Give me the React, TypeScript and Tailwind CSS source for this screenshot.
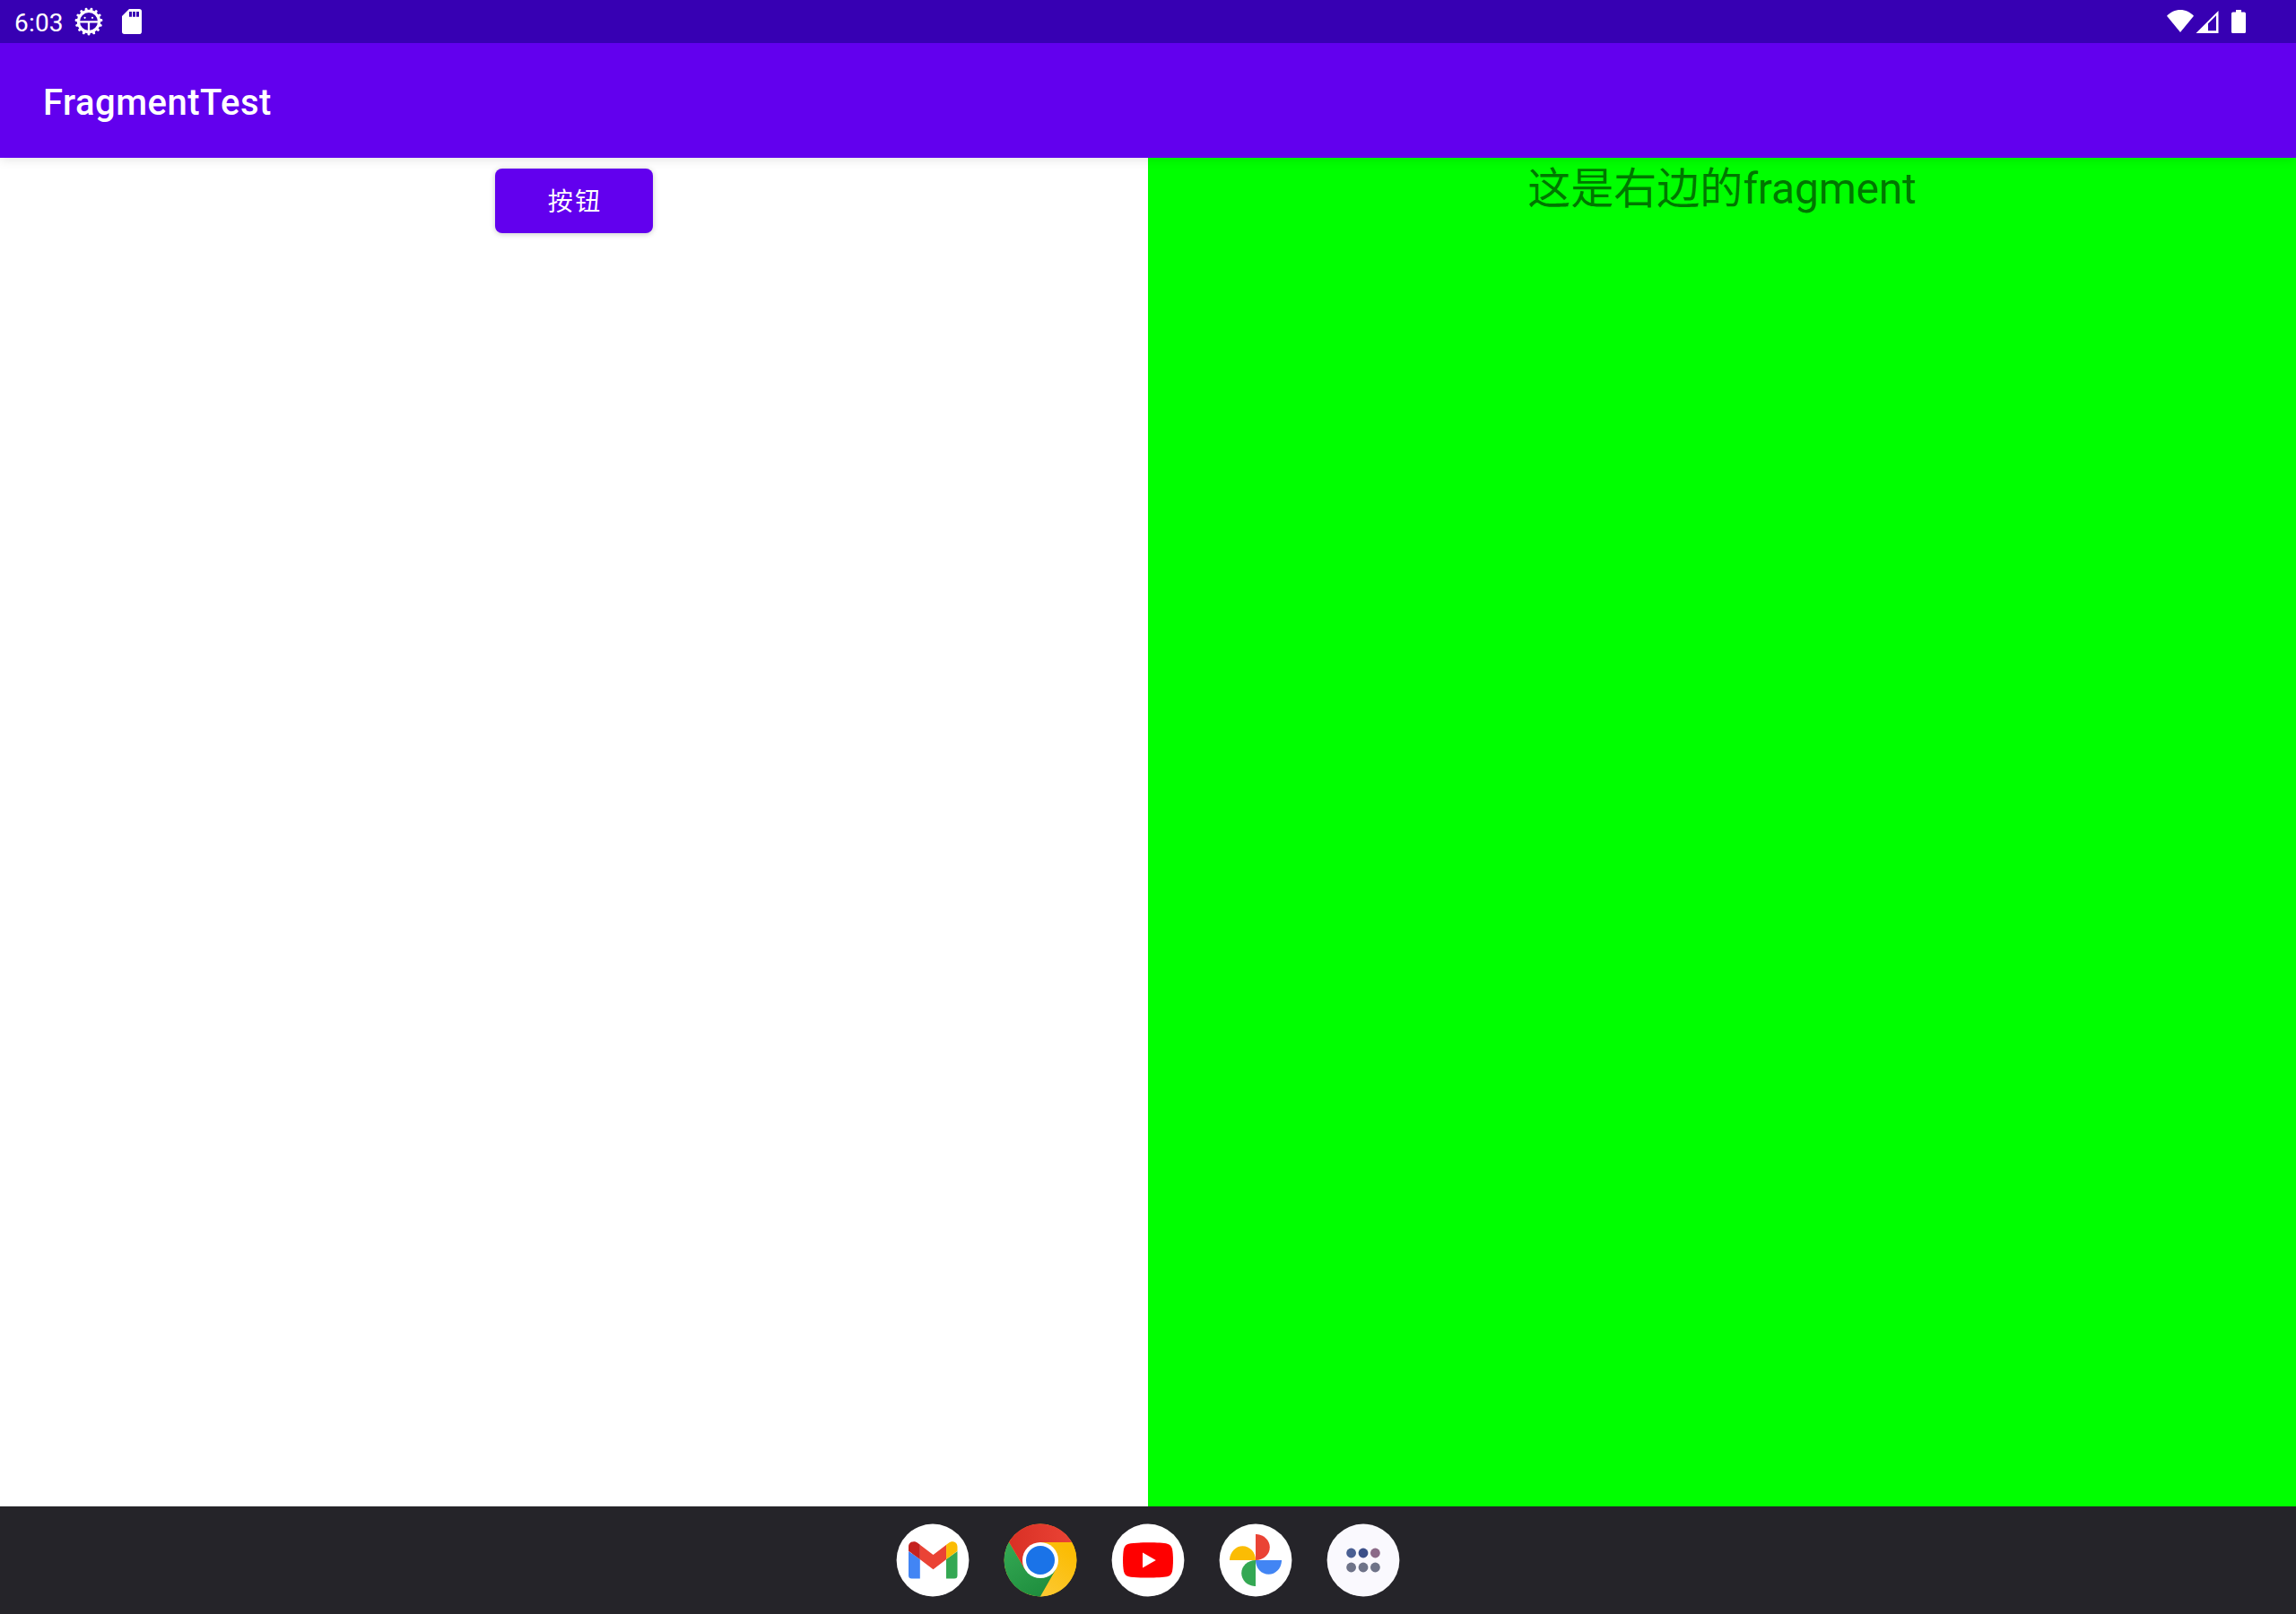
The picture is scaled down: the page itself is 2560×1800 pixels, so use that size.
import type { ReactNode } from "react";

function GearBugIcon() {
  const teeth = Array.from({ length: 15 }, (_, i) => i * 24);
  return (
    <svg className="size-8" viewBox="0 0 32 32" fill="none" stroke="#fff">
      <circle cx="16" cy="16" r="11.6" strokeWidth="3.2" />
      {teeth.map((a) => (
        <path key={a} d="M16 28V30" strokeWidth="3" strokeLinecap="round" transform={`rotate(${a} 16 16)`} />
      ))}
      <path d="M5 16.300H27M16 16V27" strokeWidth="2.3" />
      <circle cx="11.6" cy="11.8" r="1.100" fill="#fff" stroke="none" />
      <circle cx="20" cy="11.8" r="1.100" fill="#fff" stroke="none" />
    </svg>
  );
}

function SdCardIcon() {
  return (
    <svg className="h-7 w-[22px]" viewBox="0 0 22 28">
      <path
        fill="#fff"
        fillRule="evenodd"
        d="M8 0H19.2A2.8 2.8 0 0 1 22 2.8V25.2A2.8 2.8 0 0 1 19.2 28H2.8A2.8 2.8 0 0 1 0 25.2V8ZM8 3V8.8H11V3ZM12 3V8.8H15V3ZM16 3V8.8H19V3Z"
      />
    </svg>
  );
}

function WifiIcon() {
  return (
    <svg className="mb-px h-[25px] w-[30px]" viewBox="0 0 30 25">
      <path fill="#fff" d="M15 25L0 6.8C4 2.6 9.2 0 15 0S26 2.6 30 6.8Z" />
    </svg>
  );
}

function SignalIcon() {
  return (
    <svg className="h-[25px] w-[26px]" viewBox="0 0 26 25">
      <path fill="#fff" fillRule="evenodd" d="M0.5 25L25.5 0V25ZM14 14.2V22.3H23V5.3Z" />
    </svg>
  );
}

function BatteryIcon() {
  return (
    <svg className="h-[26px] w-4" viewBox="0 0 16 26">
      <path fill="#fff" d="M5 0H11V2.6H14.4Q16 2.6 16 4.2V24.4Q16 26 14.4 26H1.6Q0 26 0 24.4V4.2Q0 2.6 1.6 2.6H5Z" />
    </svg>
  );
}

function DockIcon({ label, fill = "#fff", children }: { label: string; fill?: string; children: ReactNode }) {
  return (
    <button aria-label={label} className="flex size-[82px] items-center justify-center">
      <svg className="size-[82px]" viewBox="-41 -41 82 82">
        <circle r="40.4" fill={fill} />
        {children}
      </svg>
    </button>
  );
}

function Gmail() {
  return (
    <DockIcon label="Gmail">
      <path fill="#4285f4" d="M-27 -10L-14.2 -1V20.5H-23.5A3.5 3.5 0 0 1 -27 17Z" />
      <path fill="#34a853" d="M27.5 -10L15 -1V20.5H24A3.5 3.5 0 0 0 27.5 17Z" />
      <path fill="#ea4335" d="M-14.3 -17.3L0.5 -6L15.2 -17.3V-0.9L0.5 10.3L-14.3 -0.9Z" />
      <path fill="#c5221f" d="M-27 -15C-27 -20.5 -20.5 -22.5 -16.5 -19.1L-14.2 -17.3V-0.9L-27 -10.3Z" />
      <path fill="#fbbc04" d="M27.5 -15C27.5 -20.5 21.5 -22.5 17.5 -19.1L15.1 -17.3V-0.9L27.5 -10.3Z" />
    </DockIcon>
  );
}

function Chrome() {
  return (
    <DockIcon label="Chrome" fill="#fbc116">
      <defs>
        <linearGradient id="chrome-red" x1="0" x2="1">
          <stop offset="0" stopColor="#d93025" />
          <stop offset="1" stopColor="#ea4335" />
        </linearGradient>
        <linearGradient id="chrome-green" x1="0.7" y1="1" x2="0.1" y2="0">
          <stop offset="0" stopColor="#1e8e3e" />
          <stop offset="1" stopColor="#34a853" />
        </linearGradient>
        <linearGradient id="chrome-yellow" x1="0" y1="1" x2="0.5" y2="0">
          <stop offset="0" stopColor="#fcc934" />
          <stop offset="1" stopColor="#fbbc04" />
        </linearGradient>
      </defs>
      <path fill="url(#chrome-yellow)" d="M0 -20H35.1A40.4 40.4 0 0 1 0 40.4L17.3 10Z" />
      <path fill="url(#chrome-green)" d="M0 40.4A40.4 40.4 0 0 1 -35 -20.2L-17.3 10L0 15L17.3 10Z" />
      <path fill="url(#chrome-red)" d="M-35 -20.2A40.4 40.4 0 0 1 35.1 -20H0L-17.3 10Z" />
      <circle r="20" fill="#fff" />
      <circle r="16" fill="#1a73e8" />
    </DockIcon>
  );
}

function YouTube() {
  return (
    <DockIcon label="YouTube">
      <path
        fill="#f00"
        d="M0 -19.7C10 -19.7 18 -19.2 21.5 -18.3C24.5 -17.5 26.3 -15.5 27 -12.5C28.3 -6 28.3 6 27 12.5C26.3 15.5 24.5 17.5 21.5 18.3C14 20 -14 20 -21.5 18.3C-24.5 17.5 -26.3 15.5 -27 12.5C-28.3 6 -28.3 -6 -27 -12.5C-26.3 -15.5 -24.5 -17.5 -21.5 -18.3C-18 -19.2 -10 -19.7 0 -19.7Z"
      />
      <path fill="#fff" d="M-6 -8.5V8.5L8.8 0Z" />
    </DockIcon>
  );
}

function Photos() {
  return (
    <DockIcon label="Photos">
      <path fill="#ea4335" d="M0 0V-29H1C9.5 -28.5 15.8 -22 15.8 -14.5C15.8 -6.5 9 0 0 0Z" />
      <path fill="#4285f4" d="M0 0H29V1C28.5 9.5 22 15.8 14.5 15.8C6.5 15.8 0 9 0 0Z" />
      <path fill="#34a853" d="M0 0V29H-1C-9.5 28.5 -15.8 22 -15.8 14.5C-15.8 6.5 -9 0 0 0Z" />
      <path fill="#fbbc04" d="M0 0H-29V-1C-28.5 -9.5 -22 -15.8 -14.5 -15.8C-6.5 -15.8 0 -9 0 0Z" />
    </DockIcon>
  );
}

function AllApps() {
  return (
    <DockIcon label="All apps" fill="#faf9fe">
      <circle cx="-13.4" cy="-8" r="5.4" fill="#4a5f93" />
      <circle cx="0" cy="-8" r="5.4" fill="#3c5089" />
      <circle cx="13.4" cy="-8" r="5.4" fill="#8b6a88" />
      <circle cx="-13.4" cy="8" r="5.4" fill="#6e7388" />
      <circle cx="0" cy="8" r="5.4" fill="#6e7388" />
      <circle cx="13.4" cy="8" r="5.4" fill="#6e7388" />
    </DockIcon>
  );
}

export default function App() {
  return (
    <div className="flex h-[1800px] w-[2560px] flex-col overflow-hidden bg-white font-[Roboto,'Noto_Sans_CJK_SC',sans-serif]">
      <header className="relative z-10 shadow-[0_1px_12px_rgba(0,0,0,0.13)]">
        <div className="flex h-12 items-center justify-between bg-[#3700b3] pr-14 pl-4 text-white">
          <div className="flex items-center">
            <span className="mt-1 w-[67px] text-[28px] leading-8 tracking-[0.2px]">6:03</span>
            <GearBugIcon />
            <span className="ml-[21px]">
              <SdCardIcon />
            </span>
          </div>
          <div className="flex items-end">
            <WifiIcon />
            <span className="ml-0.5">
              <SignalIcon />
            </span>
            <span className="ml-3.5">
              <BatteryIcon />
            </span>
          </div>
        </div>
        <div className="flex h-32 items-center bg-[#6200ee] px-12">
          <h1 className="mt-[6px] text-[40px] leading-[48px] font-medium tracking-[0.5px] text-white">FragmentTest</h1>
        </div>
      </header>
      <main className="flex flex-1">
        <section className="flex-1 bg-white pt-3">
          <button className="mx-auto flex h-[72px] w-44 items-center justify-center rounded-lg bg-[#6200ee] pt-1 pl-[2.5px] text-[28px] tracking-[2.5px] text-white shadow-[0_1px_6px_rgba(0,0,0,0.22)]">
            按钮
          </button>
        </section>
        <section className="flex-1 bg-[#00ff00]">
          <p className="text-center text-[48px] leading-[70px] text-black/54">
            这是右边的<span className="tracking-[-0.2px]">fragment</span>
          </p>
        </section>
      </main>
      <nav className="flex h-[120px] items-center justify-center gap-[38px] bg-[#252429]">
        <Gmail />
        <Chrome />
        <YouTube />
        <Photos />
        <AllApps />
      </nav>
    </div>
  );
}
